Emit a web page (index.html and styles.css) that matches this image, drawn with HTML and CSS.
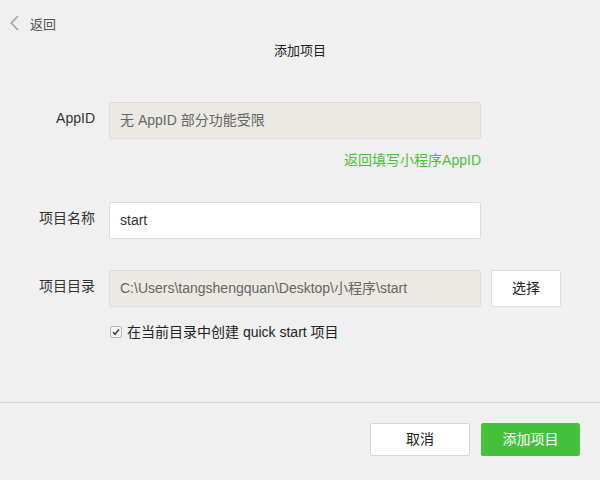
FILE: index.html
```html
<!DOCTYPE html>
<html lang="zh-CN">
<head>
<meta charset="utf-8">
<link rel="stylesheet" href="styles.css">
</head>
<body>
<div class="page">
  <div class="back">
    <svg class="back-icon" width="9" height="16" viewBox="0 0 9 16"><path d="M8 1 L1.2 8 L8 15" fill="none" stroke="#9a9a9a" stroke-width="1.3"/></svg>
    <span>返回</span>
  </div>
  <div class="title">添加项目</div>
  <div class="form">
    <div class="row">
      <div class="label">AppID</div>
      <div class="input disabled">无 AppID 部分功能受限</div>
    </div>
    <div class="hint"><span class="link">返回填写小程序AppID</span></div>
    <div class="row row-name">
      <div class="label">项目名称</div>
      <div class="input">start</div>
    </div>
    <div class="row row-dir">
      <div class="label">项目目录</div>
      <div class="input disabled">C:\Users\tangshengquan\Desktop\小程序\start</div>
      <div class="btn btn-choose">选择</div>
    </div>
    <div class="check">
      <span class="box"><svg width="8" height="8" viewBox="0 0 8 8"><path d="M1 4.2 L3 6.2 L7 1.5" fill="none" stroke="#444" stroke-width="1.6"/></svg></span>
      <span>在当前目录中创建 quick start 项目</span>
    </div>
  </div>
  <div class="footer">
    <div class="btn btn-cancel">取消</div>
    <div class="btn btn-primary">添加项目</div>
  </div>
</div>
</body>
</html>
```
FILE: styles.css
```css
html, body {
  margin: 0;
  padding: 0;
}
body {
  background: #f0f0f0;
  font-family: "Liberation Sans", Arial, "Noto Sans CJK SC", sans-serif;
  font-size: 14px;
  color: #333;
}
.page {
  width: 600px;
  height: 480px;
  display: flex;
  flex-direction: column;
}
.back {
  display: flex;
  align-items: center;
  gap: 11px;
  padding: 13px 0 0 10px;
  height: 20px;
  font-size: 13px;
  color: #555;
}
.back-icon {
  display: block;
}
.title {
  margin-top: 8px;
  line-height: 20px;
  text-align: center;
  font-size: 13px;
  color: #222;
}
.form {
  margin-top: 41px;
}
.row {
  display: flex;
  align-items: flex-start;
  gap: 14px;
}
.label {
  width: 95px;
  text-align: right;
  line-height: 16px;
  padding-top: 8px;
  color: #333;
}
.input {
  width: 372px;
  height: 37px;
  box-sizing: border-box;
  border: 1px solid #dcdcdc;
  border-radius: 2px;
  background: #fff;
  padding: 0 10px;
  line-height: 35px;
  color: #333;
  white-space: nowrap;
  overflow: hidden;
}
.input.disabled {
  background: #eae9e3;
  color: #666;
}
.hint {
  margin-top: 11px;
  width: 481px;
  text-align: right;
  line-height: 20px;
  font-size: 14px;
}
.link {
  color: #4cbf40;
}
.row-name {
  margin-top: 32px;
}
.row-dir {
  margin-top: 31px;
  gap: 0;
}
.row-dir .label {
  margin-right: 14px;
}
.btn {
  box-sizing: border-box;
  height: 33px;
  line-height: 31px;
  text-align: center;
  border-radius: 2px;
  font-size: 14px;
}
.btn-choose {
  margin-left: 10px;
  width: 70px;
  height: 37px;
  line-height: 35px;
  background: #fff;
  border: 1px solid #dcdcdc;
  color: #222;
}
.check {
  margin-top: 15px;
  padding-left: 110px;
  display: flex;
  align-items: center;
  gap: 5px;
  line-height: 20px;
  color: #222;
}
.box {
  width: 12px;
  height: 12px;
  box-sizing: border-box;
  border: 1px solid #b8b8b8;
  border-radius: 2px;
  background: #f4f4f4;
  display: flex;
  align-items: center;
  justify-content: center;
}
.box svg {
  display: block;
}
.footer {
  margin-top: 60px;
  border-top: 1px solid #d8d8d8;
  padding: 20px 20px 0 0;
  display: flex;
  justify-content: flex-end;
  gap: 11px;
}
.btn-cancel {
  width: 100px;
  background: #fff;
  border: 1px solid #d6d6d6;
  color: #222;
}
.btn-primary {
  width: 99px;
  background: #47c03e;
  border: 1px solid #47c03e;
  color: #fff;
}
```
